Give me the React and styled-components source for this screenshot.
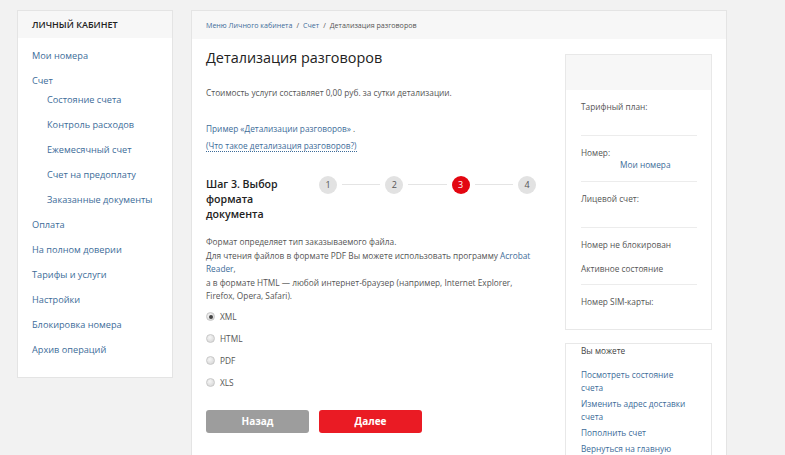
import React from "react";
import styled, { createGlobalStyle } from "styled-components";

const Global = createGlobalStyle`
  html, body { margin: 0; padding: 0; background: #f2f2f2; overflow: hidden; }
  body { font-family: "Open Sans", "Noto Sans", sans-serif; color: #555; }
  * { box-sizing: border-box; }
`;

const Page = styled.div`
  display: flex;
  align-items: flex-start;
  gap: 18px;
  padding: 10px 0 0 17px;
  height: 455px;
`;

const SideCard = styled.nav`
  width: 156px;
  background: #fff;
  border: 1px solid #e4e4e4;
  padding-bottom: 15px;
`;

const SideHead = styled.div`
  height: 27px;
  background: #f7f7f7;
  display: flex;
  align-items: center;
  padding-left: 14px;
  font-size: 9px;
  font-weight: 600;
  color: #222;
  text-transform: uppercase;
`;

const SideList = styled.ul`
  list-style: none;
  margin: 0;
  padding: 5px 0 0;
`;

const SubList = styled.ul`
  list-style: none;
  margin: -6px 0 0;
  padding: 0;
`;

const SideItem = styled.li`
  line-height: 25px;
  padding-left: ${(p) => (p.$sub ? 15 : 14)}px;
  font-size: 9.2px;
  color: #3d6c99;
  white-space: nowrap;
`;

const Main = styled.main`
  width: 536px;
  height: 470px;
  background: #fff;
  border: 1px solid #e4e4e4;
  border-bottom: none;
`;

const Crumbs = styled.div`
  height: 28px;
  background: #f7f7f7;
  display: flex;
  align-items: center;
  padding-left: 14px;
  font-size: 7.1px;
  color: #555;
  gap: 4px;
`;

const CrumbLink = styled.span`
  color: #3d6c99;
`;

const Body = styled.div`
  display: flex;
  gap: 25px;
  padding: 0 14px;
`;

const Content = styled.div`
  width: 334px;
  padding-top: 9px;
`;

const Title = styled.h1`
  margin: 0;
  font-size: 14.4px;
  line-height: 20px;
  font-weight: 500;
  color: #222;
`;

const Text = styled.p`
  margin: ${(p) => p.$mt || 0}px 0 0;
  font-size: 8.3px;
  line-height: ${(p) => p.$lh || 13}px;
  color: #555;
`;

const Link = styled.span`
  color: #3d6c99;
  ${(p) => p.$dotted && "border-bottom: 1px dotted #3d6c99;"}
`;

const Links = styled.div`
  margin-top: 21px;
  font-size: 8.3px;
  line-height: 17px;
  color: #555;
`;

const StepRow = styled.div`
  display: flex;
  align-items: flex-start;
  margin-top: 23px;
  padding-right: 4px;
`;

const StepTitle = styled.div`
  width: 113px;
  font-size: 10.6px;
  line-height: 15px;
  font-weight: 600;
  color: #222;
  padding-right: 30px;
`;

const Steps = styled.div`
  flex: 1;
  display: flex;
  align-items: center;
  margin-top: -1.5px;
`;

const Circle = styled.div`
  width: 18px;
  height: 18px;
  border-radius: 50%;
  background: ${(p) => (p.$active ? "#e30611" : "#e2e2e2")};
  color: ${(p) => (p.$active ? "#fff" : "#555")};
  font-size: 9px;
  display: flex;
  align-items: center;
  justify-content: center;
  flex: none;
`;

const Line = styled.div`
  flex: 1;
  height: 1px;
  background: #e4e4e4;
  margin: 0 5px;
`;

const Radios = styled.div`
  margin-top: 3px;
`;

const RadioRow = styled.label`
  display: flex;
  align-items: center;
  height: 22px;
  gap: 5px;
  font-size: 8.3px;
  color: #555;
`;

const RadioDot = styled.span`
  width: 9px;
  height: 9px;
  border-radius: 50%;
  background: radial-gradient(circle at 40% 35%, #f6f6f6, #d2d2d2);
  border: 1px solid #c8c8c8;
  display: flex;
  align-items: center;
  justify-content: center;
  &::after {
    content: "";
    width: 4px;
    height: 4px;
    border-radius: 50%;
    background: ${(p) => (p.$checked ? "#444" : "transparent")};
  }
`;

const Buttons = styled.div`
  display: flex;
  gap: 10px;
  margin-top: 16px;
`;

const Button = styled.button`
  width: 103px;
  height: 23px;
  border: none;
  border-radius: 3px;
  background: ${(p) => (p.$primary ? "#ea1b24" : "#9d9d9d")};
  color: #fff;
  font-family: inherit;
  font-size: 10px;
  font-weight: 700;
`;

const Aside = styled.aside`
  width: 147px;
  padding-top: 15px;
  display: flex;
  flex-direction: column;
  gap: 13px;
`;

const InfoCard = styled.div`
  border: 1px solid #e8e8e8;
  background: #fff;
  padding-bottom: ${(p) => p.$pb || 0}px;
`;

const InfoHead = styled.div`
  height: 35px;
  background: #f7f7f7;
`;

const InfoBody = styled.div`
  padding: 0 14px 0 15px;
`;

const Section = styled.div`
  padding: 11px 0 ${(p) => p.$pb || 10}px;
  border-bottom: ${(p) => (p.$last ? "none" : "1px solid #ececec")};
  display: flex;
  flex-direction: column;
  gap: ${(p) => p.$gap || 0}px;
`;

const Label = styled.div`
  font-size: 8.3px;
  line-height: 12px;
  color: #555;
`;

const Value = styled.div`
  height: 12px;
  font-size: 8.3px;
  line-height: 12px;
  color: #3d6c99;
  padding-left: 39px;
`;

const CanHead = styled.div`
  padding: 0 15px;
  font-size: 8.3px;
  line-height: 13px;
  color: #444;
`;

const CanList = styled.div`
  padding: 11px 15px 0;
  display: flex;
  flex-direction: column;
  gap: 3px;
`;

const CanLink = styled.div`
  font-size: 8.3px;
  line-height: 13px;
  color: #3d6c99;
`;

const subMenu = [
  "Состояние счета",
  "Контроль расходов",
  "Ежемесячный счет",
  "Счет на предоплату",
  "Заказанные документы",
];

const restMenu = [
  "Оплата",
  "На полном доверии",
  "Тарифы и услуги",
  "Настройки",
  "Блокировка номера",
  "Архив операций",
];

const formats = ["XML", "HTML", "PDF", "XLS"];

export default function App() {
  return (
    <>
      <Global />
      <Page>
        <SideCard>
          <SideHead>Личный кабинет</SideHead>
          <SideList>
            <SideItem>Мои номера</SideItem>
            <SideItem>
              Счет
              <SubList>
                {subMenu.map((t) => (
                  <SideItem key={t} $sub>{t}</SideItem>
                ))}
              </SubList>
            </SideItem>
            {restMenu.map((t) => (
              <SideItem key={t}>{t}</SideItem>
            ))}
          </SideList>
        </SideCard>
        <Main>
          <Crumbs>
            <CrumbLink>Меню Личного кабинета</CrumbLink>/<CrumbLink>Счет</CrumbLink>/<span>Детализация разговоров</span>
          </Crumbs>
          <Body>
            <Content>
              <Title>Детализация разговоров</Title>
              <Text $mt={18}>Стоимость услуги составляет 0,00 руб. за сутки детализации.</Text>
              <Links>
                <div><Link>Пример «Детализации разговоров»</Link> .</div>
                <div><Link $dotted>(Что такое детализация разговоров?)</Link></div>
              </Links>
              <StepRow>
                <StepTitle>Шаг 3. Выбор формата документа</StepTitle>
                <Steps>
                  <Circle>1</Circle>
                  <Line />
                  <Circle>2</Circle>
                  <Line />
                  <Circle $active>3</Circle>
                  <Line />
                  <Circle>4</Circle>
                </Steps>
              </StepRow>
              <Text $mt={13} $lh={13.5}>
                Формат определяет тип заказываемого файла.<br />
                Для чтения файлов в формате PDF Вы можете использовать программу <Link>Acrobat</Link>{" "}
                <Link>Reader</Link>,<br />
                а в формате HTML — любой интернет-браузер (например, Internet Explorer, Firefox, Opera, Safari).
              </Text>
              <Radios>
                {formats.map((f, i) => (
                  <RadioRow key={f}>
                    <RadioDot $checked={i === 0} />
                    {f}
                  </RadioRow>
                ))}
              </Radios>
              <Buttons>
                <Button>Назад</Button>
                <Button $primary>Далее</Button>
              </Buttons>
            </Content>
            <Aside>
              <InfoCard>
                <InfoHead />
                <InfoBody>
                  <Section>
                    <Label>Тарифный план:</Label>
                    <Value />
                  </Section>
                  <Section>
                    <Label>Номер:</Label>
                    <Value>Мои номера</Value>
                  </Section>
                  <Section>
                    <Label>Лицевой счет:</Label>
                    <Value />
                  </Section>
                  <Section $gap={12} $pb={9}>
                    <Label>Номер не блокирован</Label>
                    <Label>Активное состояние</Label>
                  </Section>
                  <Section $last $pb={9}>
                    <Label>Номер SIM-карты:</Label>
                    <Value />
                  </Section>
                </InfoBody>
              </InfoCard>
              <InfoCard $pb={20}>
                <CanHead>Вы можете</CanHead>
                <CanList>
                  <CanLink>Посмотреть состояние<br />счета</CanLink>
                  <CanLink>Изменить адрес доставки<br />счета</CanLink>
                  <CanLink>Пополнить счет</CanLink>
                  <CanLink>Вернуться на главную</CanLink>
                </CanList>
              </InfoCard>
            </Aside>
          </Body>
        </Main>
      </Page>
    </>
  );
}
